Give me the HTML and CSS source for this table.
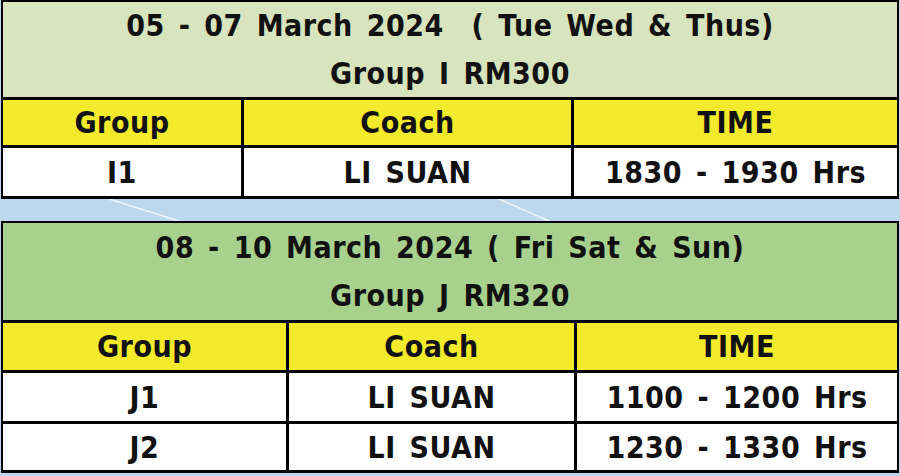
FILE: index.html
```html
<!DOCTYPE html>
<html>
<head>
<meta charset="utf-8">
<link rel="stylesheet" href="styles.css">
</head>
<body>
<div class="page">
  <section class="sched sched-a">
    <div class="title">
      <div class="title-line">05 - 07 March 2024&nbsp;&nbsp;( Tue Wed &amp; Thus)</div>
      <div class="title-line">Group I RM300</div>
    </div>
    <div class="row head">
      <div class="cell">Group</div>
      <div class="cell">Coach</div>
      <div class="cell">TIME</div>
    </div>
    <div class="row data">
      <div class="cell">I1</div>
      <div class="cell">LI SUAN</div>
      <div class="cell">1830 - 1930 Hrs</div>
    </div>
  </section>

  <div class="gap">
    <svg class="glare" width="900" height="22" viewBox="0 0 900 22">
      <line x1="108" y1="0" x2="178" y2="22" stroke="#eef5fc" stroke-width="1.5"/>
      <line x1="498" y1="0" x2="548" y2="22" stroke="#eef5fc" stroke-width="1.5"/>
    </svg>
  </div>

  <section class="sched sched-b">
    <div class="title">
      <div class="title-line">08 - 10 March 2024 ( Fri Sat &amp; Sun)</div>
      <div class="title-line">Group J RM320</div>
    </div>
    <div class="row head">
      <div class="cell">Group</div>
      <div class="cell">Coach</div>
      <div class="cell">TIME</div>
    </div>
    <div class="row data r1">
      <div class="cell">J1</div>
      <div class="cell">LI SUAN</div>
      <div class="cell">1100 - 1200 Hrs</div>
    </div>
    <div class="row data r2">
      <div class="cell">J2</div>
      <div class="cell">LI SUAN</div>
      <div class="cell">1230 - 1330 Hrs</div>
    </div>
  </section>
</div>
</body>
</html>
```

FILE: styles.css
```css
html, body {
  margin: 0;
  padding: 0;
  background: #bdd7ee;
}
body {
  width: 900px;
  height: 476px;
  overflow: hidden;
  font-family: "DejaVu Sans Condensed", "DejaVu Sans", sans-serif;
  font-weight: bold;
  font-size: 30px;
  letter-spacing: 0.5px;
  word-spacing: 4px;
  color: #111;
}
.page {
  padding-left: 1px;
}
.sched {
  width: 898px;
  box-sizing: border-box;
  border: 2px solid #000;
  border-bottom-width: 3px;
}
.title {
  display: flex;
  flex-direction: column;
  border-bottom: 3px solid #000;
}
.sched-a .title { background: #d8e4bd; height: 95px; }
.sched-b .title { background: #a9d18e; height: 97px; }
.title-line {
  flex: 1;
  display: flex;
  align-items: center;
  justify-content: center;
  white-space: nowrap;
}
.row {
  display: grid;
}
.sched-a .row { grid-template-columns: 238px 330px 1fr; }
.sched-b .row { grid-template-columns: 283px 288px 1fr; }
.cell {
  display: flex;
  align-items: center;
  justify-content: center;
  white-space: nowrap;
}
.cell + .cell {
  border-left: 3px solid #000;
}
.head {
  background: #f2ea2b;
  border-bottom: 3px solid #000;
}
.data { background: #fff; }
.sched-a .head { height: 45px; }
.sched-a .data { height: 48px; }
.sched-b .head { height: 47px; }
.sched-b .r1 { height: 48px; border-bottom: 3px solid #000; }
.sched-b .r2 { height: 46px; }
.gap { height: 22px; }
.glare { display: block; }
```
